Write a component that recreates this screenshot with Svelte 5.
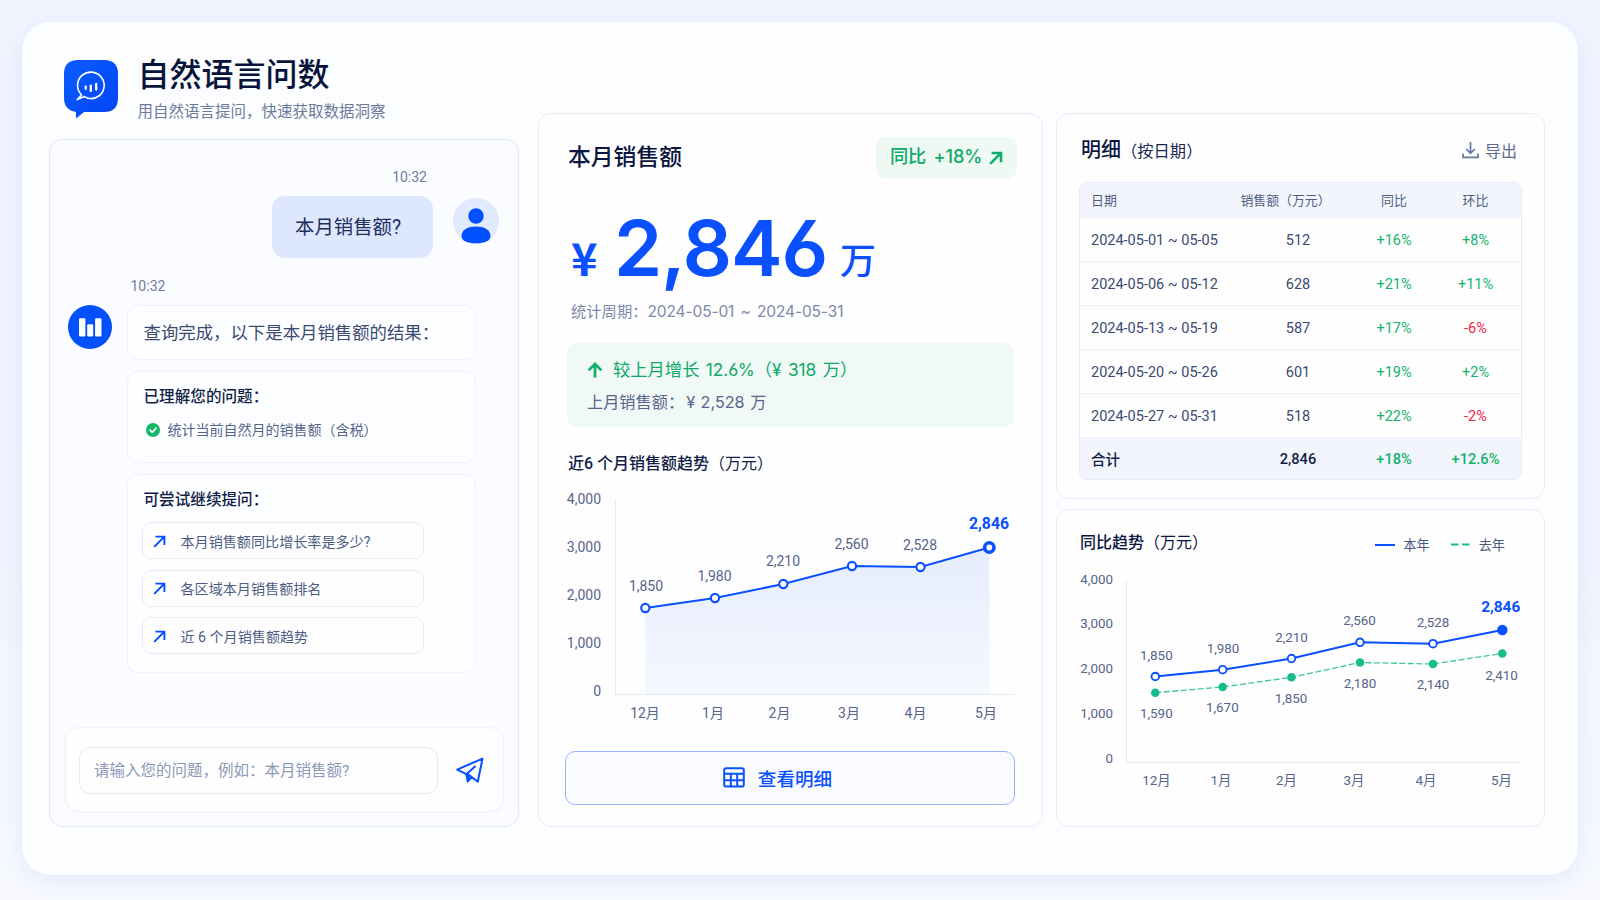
<script>
  const prompts = ['本月销售额同比增长率是多少?', '各区域本月销售额排名', '近 6 个月销售额趋势'];

  const rows = [
    ['2024-05-01 ~ 05-05', '512', '+16%', '+8%'],
    ['2024-05-06 ~ 05-12', '628', '+21%', '+11%'],
    ['2024-05-13 ~ 05-19', '587', '+17%', '-6%'],
    ['2024-05-20 ~ 05-26', '601', '+19%', '+2%'],
    ['2024-05-27 ~ 05-31', '518', '+22%', '-2%']
  ];

  const yNames = ['4,000', '3,000', '2,000', '1,000', '0'];
  const xNames = ['12月', '1月', '2月', '3月', '4月', '5月'];

  const sales = [
    { v: '1,850', x: 88.3, y: 123, lx: 89, ly: 101 },
    { v: '1,980', x: 158, y: 113, lx: 157.5, ly: 91 },
    { v: '2,210', x: 226.3, y: 99, lx: 226, ly: 76.5 },
    { v: '2,560', x: 295, y: 81, lx: 294.5, ly: 59 },
    { v: '2,528', x: 363.5, y: 82, lx: 363, ly: 59.7 },
    { v: '2,846', x: 432.3, y: 62.5, lx: 432, ly: 38.3 }
  ];
  const salesX = [88, 156, 222.5, 292, 358.5, 429];
  const salesY = [14.5, 62.5, 110.5, 158.5, 206.5];

  const thisYear = [
    { v: '1,850', x: 85.3, y: 111.5, lx: 86.3, ly: 91 },
    { v: '1,980', x: 152.7, y: 104.7, lx: 153, ly: 83.5 },
    { v: '2,210', x: 221.5, y: 93.5, lx: 221.5, ly: 72.5 },
    { v: '2,560', x: 290, y: 77.3, lx: 289.5, ly: 55.5 },
    { v: '2,528', x: 363, y: 78.7, lx: 363, ly: 58 },
    { v: '2,846', x: 432.3, y: 65, lx: 430.7, ly: 41.5 }
  ];
  const lastYear = [
    { v: '1,590', x: 85.3, y: 127.7, lx: 86.3, ly: 148.5 },
    { v: '1,670', x: 152.7, y: 122, lx: 152.3, ly: 143 },
    { v: '1,850', x: 221.5, y: 112.3, lx: 221, ly: 133.5 },
    { v: '2,180', x: 290, y: 97.5, lx: 290, ly: 119 },
    { v: '2,140', x: 363, y: 99, lx: 363, ly: 120 },
    { v: '2,410', x: 432.3, y: 88.5, lx: 431.5, ly: 110.5 }
  ];
  const yoyX = [86.5, 151, 216.5, 284, 356, 431.5];
  const yoyY = [14.5, 59, 103.5, 148.5, 194];

  const line = (pts) => pts.map((p) => `${p.x},${p.y}`).join(' ');
</script>

<main class="shell">
  <section class="left">
    <header class="brand">
      <svg class="logo" width="54" height="60" viewBox="0 0 54 60">
        <defs>
          <linearGradient id="logoFill" x1="0" y1="0" x2="1" y2="1">
            <stop offset="0" stop-color="#0b5cff" />
            <stop offset="1" stop-color="#0046f5" />
          </linearGradient>
        </defs>
        <path d="M14 0H40Q54 0 54 14V38Q54 52 40 52H20L12 58.5V52Q0 50 0 38V14Q0 0 14 0Z" fill="url(#logoFill)" />
        <path d="M17 34.3A13.3 13.3 0 1 1 35.5 35.5" fill="none" stroke="#fff" stroke-width="1.6" stroke-linecap="round" />
        <path d="M17.6 35L13.2 39.6L20.5 36.6Q28 41.2 35.5 35.5" fill="none" stroke="#fff" stroke-width="1.6" stroke-linecap="round" stroke-linejoin="round" />
        <path d="M21.7 26.6V28.8M26.8 25.6V31M32.2 23.9V29.6" stroke="#fff" stroke-width="2.3" stroke-linecap="round" />
      </svg>
      <div>
        <h1>自然语言问数</h1>
        <p>用自然语言提问，快速获取数据洞察</p>
      </div>
    </header>

    <div class="panel chat">
      <div class="ask">
        <div class="ask-col">
          <time>10:32</time>
          <div class="bubble">本月销售额?</div>
        </div>
        <svg class="avatar" width="46" height="46" viewBox="0 0 46 46">
          <circle cx="23" cy="23" r="23" fill="#e0e9fd" />
          <circle cx="23" cy="18" r="7.7" fill="#0050ff" />
          <path d="M8.5 38.5C8.5 31.5 15 28.5 23 28.5S37.5 31.5 37.5 38.5Q36.5 45.3 23 45.3T8.5 38.5Z" fill="#0050ff" />
        </svg>
      </div>

      <time class="reply-time">10:32</time>
      <div class="reply">
        <svg class="bot" width="44" height="44" viewBox="0 0 44 44">
          <circle cx="22" cy="22" r="22" fill="#0050fb" />
          <g fill="#fff">
            <rect x="11" y="13.3" width="6.4" height="18.2" rx="1.2" />
            <rect x="19.2" y="19.3" width="6" height="12.2" rx="1.2" />
            <rect x="27.1" y="13.3" width="6.4" height="18.2" rx="1.2" />
          </g>
        </svg>
        <div class="cards">
          <div class="card result">查询完成，以下是本月销售额的结果：</div>
          <div class="card understood">
            <h3>已理解您的问题：</h3>
            <p>
              <svg width="14" height="14" viewBox="0 0 14 14">
                <circle cx="7" cy="7" r="7" fill="#12b76a" />
                <path d="M4 7.1L6.3 9.3L10.1 5.2" fill="none" stroke="#fff" stroke-width="1.7" stroke-linecap="round" stroke-linejoin="round" />
              </svg>
              统计当前自然月的销售额（含税）
            </p>
          </div>
          <div class="card more">
            <h3>可尝试继续提问：</h3>
            {#each prompts as q}
              <button class="pill">
                <svg width="13" height="14" viewBox="0 0 13 14">
                  <path d="M1.2 12.8L11 3M2.4 2.6H11.4V11" fill="none" stroke="#0050ff" stroke-width="1.9" />
                </svg>
                {q}
              </button>
            {/each}
          </div>
        </div>
      </div>

      <div class="composer">
        <div class="field">请输入您的问题，例如：本月销售额?</div>
        <svg width="28" height="28" viewBox="0 0 28 28">
          <path d="M1.2 13.6L26.5 2.6L21.8 25.7L15.4 20.9L11.7 25.5L10.4 18.2ZM10.4 18.2L19 10.6M11.7 25.3L12.6 18.8L15.4 20.9" fill="none" stroke="#0050ff" stroke-width="2" stroke-linejoin="round" stroke-linecap="round" />
        </svg>
      </div>
    </div>
  </section>

  <section class="panel kpi">
    <div class="kpi-head">
      <h2>本月销售额</h2>
      <div class="badge">
        <span>同比 +18%</span>
        <svg width="14" height="14" viewBox="0 0 14 14">
          <path d="M1.2 12.8L11.8 2.2M2.6 2H12V11.2" fill="none" stroke="#0fb06b" stroke-width="2.6" />
        </svg>
      </div>
    </div>
    <div class="amount"><span class="yen">¥</span><strong>2,846</strong><span class="unit">万</span></div>
    <p class="period">统计周期：<span>2024-05-01 ~ 2024-05-31</span></p>
    <div class="growth">
      <p class="up">
        <svg width="16" height="16" viewBox="0 0 16 16">
          <path d="M8 15.5V2M1.6 8.4L8 2L14.4 8.4" fill="none" stroke="#0fb06b" stroke-width="2.7" />
        </svg>
        较上月增长 12.6%（¥ 318 万）
      </p>
      <p class="prev">上月销售额：<span>¥ 2,528 万</span></p>
    </div>
    <h3 class="chart-title">近6 个月销售额趋势<span>（万元）</span></h3>
    <svg class="chart" width="460" height="245" viewBox="0 0 460 245">
      <defs>
        <linearGradient id="salesArea" x1="0" y1="0" x2="0" y2="1">
          <stop offset="0" stop-color="#e5ecfd" />
          <stop offset="1" stop-color="#f5f8ff" />
        </linearGradient>
      </defs>
      <path d="M58.5 14V209.5H458" fill="none" stroke="#e3e9f8" />
      <polygon points={`88.3,209 ${line(sales)} 432.3,209`} fill="url(#salesArea)" />
      <polyline points={line(sales)} fill="none" stroke="#0a50ff" stroke-width="2" />
      {#each sales as p, i}
        {#if i === 5}
          <circle cx={p.x} cy={p.y} r="4.7" fill="#fff" stroke="#0a50ff" stroke-width="3.6" />
        {:else}
          <circle cx={p.x} cy={p.y} r="4.1" fill="#fff" stroke="#0a50ff" stroke-width="2.1" />
        {/if}
        <text class:peak={i === 5} x={p.lx} y={p.ly + (i === 5 ? 5.5 : 4.8)}>{p.v}</text>
      {/each}
      {#each yNames as n, i}<text class="y" x="44" y={salesY[i] + 4.8}>{n}</text>{/each}
      {#each xNames as n, i}<text x={salesX[i]} y="232.8">{n}</text>{/each}
    </svg>
    <button class="detail">
      <svg width="22" height="21" viewBox="0 0 22 21">
        <path d="M3 1.2H19Q20.8 1.2 20.8 3V17.8Q20.8 19.6 19 19.6H3Q1.2 19.6 1.2 17.8V3Q1.2 1.2 3 1.2ZM1.2 6.8H20.8M1.2 13.2H20.8M7.8 6.8V19.6M14.2 6.8V19.6" fill="none" stroke="#0a50ff" stroke-width="2" />
      </svg>
      查看明细
    </button>
  </section>

  <section class="right">
    <div class="panel table-card">
      <div class="table-head">
        <h2>明细<span>（按日期）</span></h2>
        <div class="export">
          <svg width="17" height="18" viewBox="0 0 17 18">
            <path d="M8.5 1V12M4.2 8L8.5 12.2L12.8 8M1 12.5V16.3H16V12.5" fill="none" stroke="#6478a2" stroke-width="1.7" />
          </svg>
          导出
        </div>
      </div>
      <div class="table">
        <div class="tr th"><span>日期</span><span>销售额（万元）</span><span>同比</span><span>环比</span></div>
        {#each rows as r}
          <div class="tr">
            <span>{r[0]}</span><span>{r[1]}</span><span class="pos">{r[2]}</span>
            <span class={r[3][0] === '-' ? 'neg' : 'pos'}>{r[3]}</span>
          </div>
        {/each}
        <div class="tr total"><span>合计</span><span>2,846</span><span class="pos">+18%</span><span class="pos">+12.6%</span></div>
      </div>
    </div>

    <div class="panel yoy">
      <div class="yoy-head">
        <h3>同比趋势<span>（万元）</span></h3>
        <div class="legend">
          <i class="solid"></i><span>本年</span>
          <svg width="19" height="3" viewBox="0 0 19 3"><path d="M0 1.5H7.5M11 1.5H18.5" stroke="#1dbb8b" stroke-width="2" /></svg>
          <span>去年</span>
        </div>
      </div>
      <svg class="chart small" width="460" height="235" viewBox="0 0 460 235">
        <path d="M56.5 15V197.5H451" fill="none" stroke="#e3e9f8" />
        <polyline points={line(lastYear)} fill="none" stroke="#3cc79a" stroke-width="1.3" stroke-dasharray="6 2.5" />
        <polyline points={line(thisYear)} fill="none" stroke="#0a50ff" stroke-width="2" />
        {#each lastYear as p}
          <circle cx={p.x} cy={p.y} r="4.3" fill="#16bd8c" />
          <text x={p.lx} y={p.ly + 4.3}>{p.v}</text>
        {/each}
        {#each thisYear as p, i}
          <circle cx={p.x} cy={p.y} r={i === 5 ? 4.3 : 3.8} fill={i === 5 ? '#0a50ff' : '#fff'} stroke="#0a50ff" stroke-width="1.9" />
          <text class:peak={i === 5} x={p.lx} y={p.ly + (i === 5 ? 5.5 : 4.3)}>{p.v}</text>
        {/each}
        {#each yNames as n, i}<text class="y" x="43" y={yoyY[i] + 4.3}>{n}</text>{/each}
        {#each xNames as n, i}<text x={yoyX[i]} y="220">{n}</text>{/each}
      </svg>
    </div>
  </section>
</main>

<style>
  :global(body) {
    margin: 0;
    background: linear-gradient(180deg, #f1f5ff 0%, #f2f5ff 60%, #f8faff 100%);
    font-family: Roboto, 'Noto Sans CJK SC', sans-serif;
    color: #3b4a72;
  }
  h1, h2, h3, p { margin: 0; font-weight: 500; }
  button { font-family: inherit; text-align: left; }
  svg { display: block; flex: none; }

  .shell {
    box-sizing: border-box;
    width: 1556px;
    height: 853px;
    margin: 22px 0 25px 22px;
    padding: 0 32px 48px 27px;
    display: grid;
    grid-template-columns: 470px 505px 489px;
    column-gap: 19px;
    border-radius: 29px;
    background: #fcfdff;
    box-shadow: 0 6px 24px rgba(78, 116, 235, 0.13);
  }
  .panel {
    box-sizing: border-box;
    border: 1px solid #e7ecfa;
    border-radius: 13px;
    background: #fefeff;
  }

  .left { display: flex; flex-direction: column; }
  .brand {
    height: 117px;
    box-sizing: border-box;
    padding: 38px 0 0 15px;
    display: flex;
    gap: 19.5px;
  }
  .brand h1 { margin-top: -8px; font-size: 32px; line-height: 46px; color: #07133a; }
  .brand p { margin-top: 3px; font-size: 15.5px; line-height: 22px; font-weight: 400; color: #6c7a9d; }
  .chat {
    height: 688px;
    padding: 0 15px 14px;
    display: flex;
    flex-direction: column;
    background: #fbfcff;
    border-color: #e3e9f9;
    border-radius: 14px;
  }
  time { font-size: 14px; line-height: 20px; color: #6f7c9e; }
  .ask { display: flex; justify-content: flex-end; gap: 20px; padding: 27px 4px 0 0; }
  .ask-col { display: flex; flex-direction: column; align-items: flex-end; }
  .ask-col time { padding-right: 6px; }
  .bubble {
    box-sizing: border-box;
    margin-top: 9px;
    padding-left: 23px;
    width: 161px;
    height: 62px;
    border-radius: 13px;
    background: #dde7fd;
    font-size: 19.4px;
    line-height: 63px;
    color: #1c2d60;
  }
  .avatar { margin-top: 31px; }
  .reply-time { margin: 18px 0 0 65.5px; }
  .reply { display: flex; gap: 15px; margin-top: 9px; padding-left: 2.5px; }
  .cards { width: 349px; display: flex; flex-direction: column; gap: 11px; }
  .card {
    box-sizing: border-box;
    border: 1px solid #eef2fb;
    border-radius: 11px;
    background: #fdfeff;
    padding: 0 16px;
  }
  .result { height: 55px; font-size: 17.4px; line-height: 55px; white-space: nowrap; }
  .card h3 { font-size: 15.6px; line-height: 22px; color: #111d47; }
  .understood { height: 92px; padding-top: 14px; }
  .understood p {
    display: flex;
    align-items: center;
    gap: 7.5px;
    margin: 12px 0 0 2.5px;
    font-size: 14px;
    line-height: 20px;
    font-weight: 400;
    color: #55648a;
    white-space: nowrap;
  }
  .more { height: 199px; padding: 14px 14px 0; }
  .more h3 { padding: 0 0 11px 2px; }
  .pill {
    box-sizing: border-box;
    width: 282px;
    height: 37px;
    margin-bottom: 10.5px;
    padding: 0 10px;
    display: flex;
    align-items: center;
    gap: 15px;
    border: 1px solid #e5ebf8;
    border-radius: 9px;
    background: #fefeff;
    font-size: 14.1px;
    color: #4d5c84;
  }
  .composer {
    box-sizing: border-box;
    width: 439px;
    height: 85px;
    margin-top: auto;
    padding: 1px 19px 0 13px;
    display: flex;
    align-items: center;
    justify-content: space-between;
    border: 1px solid #eef1fb;
    border-radius: 14px;
    background: #fefeff;
    box-shadow: 0 2px 6px rgba(90, 120, 220, 0.03);
  }
  .field {
    box-sizing: border-box;
    width: 359px;
    height: 47px;
    padding-left: 14px;
    border: 1px solid #e3e9f7;
    border-radius: 11px;
    font-size: 15.5px;
    line-height: 46px;
    color: #8c98b6;
  }

  .kpi { height: 714px; margin-top: 91px; padding: 23px 25px 0 26px; }
  .kpi-head { display: flex; justify-content: space-between; }
  .kpi h2 { padding-left: 3px; font-size: 22.8px; line-height: 41px; color: #0b1640; }
  .badge {
    width: 113px;
    height: 41px;
    padding: 0 14px;
    display: flex;
    align-items: center;
    justify-content: space-between;
    border-radius: 9px;
    background: #eef9f4;
    font-family: Inter, 'Noto Sans CJK SC', sans-serif;
    font-feature-settings: 'cv03';
    font-size: 18.2px;
    line-height: 36px;
    letter-spacing: -0.2px;
    word-spacing: 3px;
    font-weight: 500;
    color: #0fa968;
    white-space: nowrap;
  }
  .badge span { padding-bottom: 3px; }
  .amount { display: flex; align-items: baseline; height: 122px; padding-left: 6px; color: #0a50ff; line-height: 140px; }
  .yen { width: 43px; font: 700 45px/140px 'Noto Sans CJK SC', sans-serif; }
  .amount strong {
    width: 226px;
    font-family: Inter, sans-serif;
    font-feature-settings: 'cv03';
    font-size: 77.5px;
    font-weight: 600;
    letter-spacing: -1.2px;
  }
  .unit { font-size: 36px; font-weight: 500; transform: translateY(-2.5px); }
  .period { padding: 1px 0 0 6px; font-size: 15.3px; line-height: 22px; color: #7d89a8; font-weight: 400; white-space: nowrap; }
  .period span { font-family: Inter, sans-serif; font-size: 15.5px; letter-spacing: -0.12px; word-spacing: 2px; }
  .growth {
    box-sizing: border-box;
    width: 447px;
    height: 84px;
    margin: 20px 0 0 2px;
    padding: 14px 20px;
    border-radius: 10px;
    background: #f0f9f6;
    font-family: Inter, 'Noto Sans CJK SC', sans-serif;
    font-feature-settings: 'cv03';
  }
  .up { display: flex; align-items: center; gap: 10px; font-size: 17.3px; line-height: 26px; color: #0fa968; font-weight: 400; word-spacing: 1.5px; }
  .prev { margin-top: 7px; font-size: 16.2px; line-height: 24px; font-weight: 400; color: #56658c; }
  .prev span { padding-left: 2px; word-spacing: 1px; }
  .chart-title { margin: 25px 0 0 3px; font-size: 16px; line-height: 24px; color: #111d47; }
  .chart-title span, .yoy h3 span { font-weight: 400; }
  .chart { margin: 8.5px 0 0 -8px; }
  .chart text { font-size: 14px; fill: #56648a; text-anchor: middle; }
  .chart .y { text-anchor: end; }
  .chart .peak { font-size: 15.8px; font-weight: 700; fill: #0a50ff; }
  .detail {
    box-sizing: border-box;
    width: 450px;
    height: 54px;
    margin-top: 21px;
    display: flex;
    align-items: center;
    justify-content: center;
    gap: 13px;
    padding: 0 25px 0 0;
    border: 1px solid #98b6fb;
    border-radius: 10px;
    background: #fafbff;
    font-size: 18.6px;
    font-weight: 500;
    color: #0a50ff;
  }

  .right { width: 489px; margin: 91px 0 0 -6px; display: flex; flex-direction: column; gap: 10px; }
  .table-card { height: 386px; padding: 22px 22px 0; }
  .table-head { display: flex; justify-content: space-between; align-items: center; height: 30px; padding: 0 5px 0 2px; }
  .table-head h2 { font-size: 20px; line-height: 30px; color: #0b1640; }
  .table-head h2 span { font-size: 16.3px; font-weight: 400; color: #1c294f; }
  .export { display: flex; align-items: center; gap: 6px; margin-top: -3px; font-size: 16px; color: #5d6c94; }
  .table { margin-top: 16px; border: 1px solid #e6ebf7; border-radius: 8px; overflow: hidden; }
  .tr {
    box-sizing: border-box;
    height: 44.1px;
    display: grid;
    grid-template-columns: 146px 122px 70px 93px;
    padding: 2px 0 0 11px;
    align-items: center;
    border-bottom: 1px solid #edf1f9;
    font-size: 14.5px;
  }
  .tr span { text-align: center; white-space: nowrap; }
  .tr span:first-child { text-align: left; }
  .th { height: 34.5px; padding-top: 0; background: #f2f5fc; font-size: 12.9px; color: #4f5d84; }
  .tr.th span:nth-child(2) { padding-right: 25px; }
  .total { height: 41px; padding-top: 1px; border: 0; background: #f2f5fb; font-weight: 500; color: #111d47; font-size: 14.6px; }
  .pos { color: #14b36d; }
  .neg { color: #f5223f; }

  .yoy { height: 318px; padding: 21px 22px 0; }
  .yoy-head { display: flex; justify-content: space-between; padding: 0 17px 0 1px; }
  .yoy h3 { font-size: 16px; line-height: 24px; color: #0b1640; }
  .legend { display: flex; align-items: center; padding-top: 3px; font-size: 13.2px; color: #4b5980; }
  .legend .solid { width: 20px; height: 2px; margin-right: 8px; background: #0a50ff; }
  .legend svg { margin: 0 9px 0 21px; }
  .chart.small { margin: 10px 0 0 -9px; }
  .chart.small text { font-size: 13.4px; }
  .chart.small .peak { font-size: 15.4px; }
</style>
